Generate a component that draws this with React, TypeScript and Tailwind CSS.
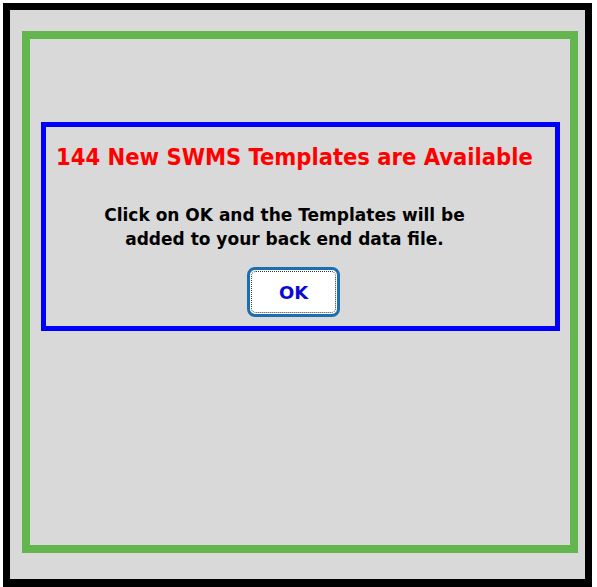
import React from "react";

export default function App() {
  return (
    <div className="h-[587px] w-[597px] overflow-hidden bg-white pl-[3px] pt-[3px] pr-[5px]">
      <div className="h-[584px] w-[589px] border-[7px] border-b-[8px] border-black bg-[#d9d9d9] pl-[12px] pt-[21px]">
        <div className="h-[522px] w-[556px] border-[8px] border-[#63b54e] pl-[11px] pt-[83px]">
          <div
            className="flex h-[209px] w-[519px] flex-col items-center border-[5px] border-[#0000ff]"
            style={{ fontFamily: '"DejaVu Sans", Verdana, sans-serif' }}
          >
            <h1
              className="mt-[14px] w-full pl-[10px] text-[23.5px] font-bold leading-[32px] text-[#ff0000]"
              style={{ fontFamily: '"DejaVu Sans Condensed", "DejaVu Sans", sans-serif', fontStretch: "condensed" }}
            >
              144 New SWMS Templates are Available
            </h1>
            <p className="mt-[30px] pr-[32px] text-center text-[17px] font-bold leading-[24px] text-black">
              Click on OK and the Templates will be
              <br />
              added to your back end data file.
            </p>
            <button className="mr-[14px] mt-[16px] flex h-[50px] w-[93px] items-center justify-center rounded-[8px] border-[3px] border-[#1b6fae] bg-white p-[1px]">
              <span className="flex h-full w-full items-center justify-center rounded-[5px] border border-dotted border-[#333] text-[18px] font-bold text-[#0a0ad6]">
                OK
              </span>
            </button>
          </div>
        </div>
      </div>
    </div>
  );
}
